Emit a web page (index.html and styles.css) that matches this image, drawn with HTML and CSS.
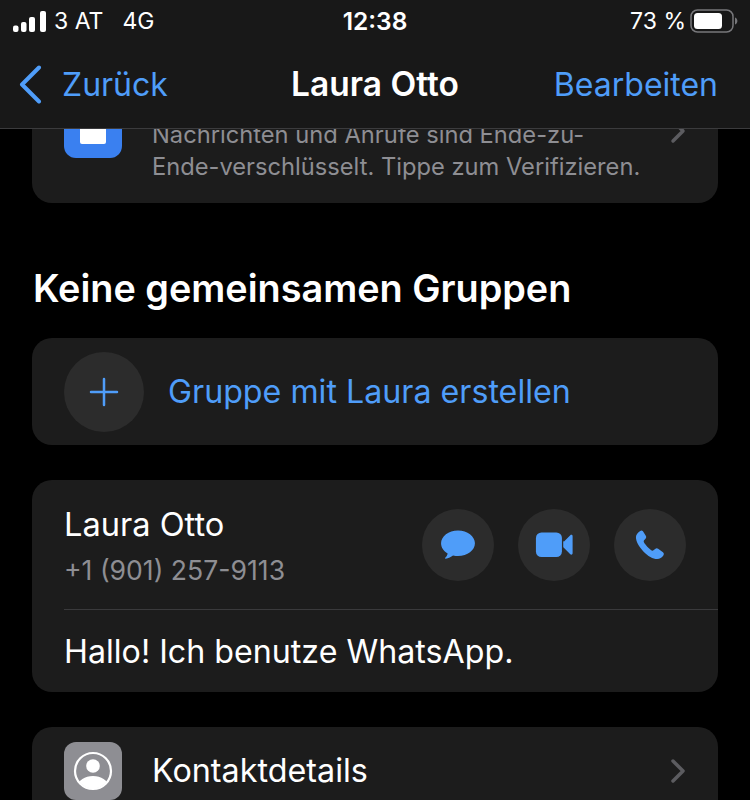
FILE: index.html
```html
<!DOCTYPE html>
<html lang="de">
<head>
<meta charset="utf-8">
<title>Laura Otto</title>
<link rel="stylesheet" href="styles.css">
</head>
<body>
<div class="screen">
  <header class="top">
    <div class="status">
      <div class="status-left">
        <svg class="signal" width="34" height="21" viewBox="0 0 34 21"><rect x="0" y="14.500" width="5.500" height="6.500" rx="2" fill="#fff"/><rect x="8" y="11" width="5.500" height="10" rx="2" fill="#fff"/><rect x="16" y="6" width="6" height="15" rx="2" fill="#fff"/><rect x="27" y="0" width="6" height="21" rx="2" fill="#fff"/></svg>
        <span class="carrier">3 AT</span>
        <span class="net">4G</span>
      </div>
      <span class="clock">12:38</span>
      <div class="status-right">
        <span class="pct">73 %</span>
        <svg width="49" height="24" viewBox="0 0 49 24"><rect x="2" y="1" width="42" height="22" rx="6.500" fill="none" stroke="#77777a" stroke-width="1.500"/><rect x="5" y="4" width="28" height="16" rx="3.500" fill="#fff"/><path d="M46 8.500c1.600.6 2.400 2 2.400 3.500s-.8 2.900-2.400 3.500z" fill="#77777a"/></svg>
      </div>
    </div>
    <nav class="navbar">
      <div class="back">
        <svg width="26" height="40" viewBox="0 0 26 40"><path d="M22 3.500 5 20.500l17 17" fill="none" stroke="#4f9df9" stroke-width="4" stroke-linecap="round" stroke-linejoin="round"/></svg>
        <span>Zurück</span>
      </div>
      <span class="title">Laura Otto</span>
      <span class="edit">Bearbeiten</span>
    </nav>
  </header>

  <main class="content">
    <section class="card secure">
      <div class="lock-icon"><div class="lock-body"></div></div>
      <p class="secure-text">Nachrichten und Anrufe sind Ende-zu-<br>Ende-verschlüsselt. Tippe zum Verifizieren.</p>
      <svg class="chev-small" width="16" height="26" viewBox="0 0 16 26"><path d="M3 3l10 10L3 23" fill="none" stroke="#5c5c60" stroke-width="3.500" stroke-linecap="round" stroke-linejoin="round"/></svg>
    </section>

    <h2 class="section-title">Keine gemeinsamen Gruppen</h2>

    <section class="card group-row">
      <div class="round large">
        <svg width="30" height="30" viewBox="0 0 30 30"><path d="M15 2v26M2 15h26" stroke="#4f9df9" stroke-width="2.500" stroke-linecap="round"/></svg>
      </div>
      <span class="group-label">Gruppe mit Laura erstellen</span>
    </section>

    <section class="card contact">
      <div class="contact-top">
        <div class="contact-id">
          <span class="contact-name">Laura Otto</span>
          <span class="contact-phone">+1 (901) 257-9113</span>
        </div>
        <div class="actions">
          <div class="round"><svg width="36" height="32" viewBox="0 0 38 34"><path d="M19 1.500C8.900 1.500 1 7.700 1 15.200c0 4.400 2.700 8.300 7 10.800-.3 1.800-1.500 3.500-2.600 4.600-.4.400-.1 1 .5.900 3-.4 5.800-1.700 7.800-3.400 1.900.4 3.800.6 5.300.6 10.100 0 18-6.100 18-13.500S29.100 1.500 19 1.500z" fill="#4f9df9"/></svg></div>
          <div class="round"><svg width="39" height="26" viewBox="0 0 40 28"><rect x="0" y="0.500" width="28" height="26.500" rx="6" fill="#4f9df9"/><path d="M30 10.500 37 3.500c1-1 2.500-.4 2.500 1v18.500c0 1.400-1.500 2-2.500 1l-7-7c-.4-.4-.6-.8-.6-1.400v-4.700c0-.5.2-1 .6-1.400z" fill="#4f9df9"/></svg></div>
          <div class="round"><svg width="30" height="30" viewBox="0 0 32 32"><path d="M8.500 1.200c-1-.8-2.200-.7-3.300 0C2.700 2.800 1 4.900 1 7.800c0 4.300 3 9.800 7.700 14.800 5 5.200 10.500 8.400 15 8.400 2.700 0 5-1.500 6.500-3.800.8-1.300.8-2.500-.4-3.500l-5.100-3.600c-1.100-.8-2.200-.7-3.200.1l-1.800 1.500c-.6.500-1.300.5-1.900.1-1.400-.9-3.300-2.600-4.700-4-1.400-1.500-3-3.500-3.700-5-.3-.6-.2-1.300.3-1.800l1.500-1.700c.9-1 1-2.200.3-3.300z" fill="#4f9df9"/></svg></div>
        </div>
      </div>
      <div class="contact-about">Hallo! Ich benutze WhatsApp.</div>
    </section>

    <section class="card details">
      <div class="details-icon">
        <svg width="40" height="40" viewBox="0 0 40 40"><defs><clipPath id="avatar-clip"><circle cx="20" cy="20" r="17.500"/></clipPath></defs><circle cx="20" cy="20" r="18" fill="none" stroke="#fff" stroke-width="2.200"/><circle cx="20" cy="15" r="6.800" fill="#fff"/><ellipse cx="20" cy="35" rx="15" ry="10" fill="#fff" clip-path="url(#avatar-clip)"/></svg>
      </div>
      <span class="details-label">Kontaktdetails</span>
      <svg class="chev" width="16" height="26" viewBox="0 0 16 26"><path d="M3 3l10 10L3 23" fill="none" stroke="#5c5c60" stroke-width="3.500" stroke-linecap="round" stroke-linejoin="round"/></svg>
    </section>
  </main>
</div>
</body>
</html>
```

FILE: styles.css
```css
* { box-sizing: border-box; }
html, body { margin: 0; padding: 0; background: #000; }
body { font-family: Inter, "Liberation Sans", sans-serif; color: #fff; }
.screen { position: relative; width: 750px; height: 800px; overflow: hidden; background: #000; }

.top { position: absolute; top: 0; left: 0; right: 0; z-index: 2; height: 129px; background: #181818; border-bottom: 1px solid #3b3b3d; }
.status { display: flex; justify-content: space-between; align-items: center; height: 42px; padding: 0 12px 0 13px; position: relative; font-size: 23px; }
.status-left { display: flex; align-items: center; }
.signal { margin-right: 7px; }
.carrier { margin-right: 19px; }
.clock { position: absolute; left: 0; right: 0; text-align: center; font-weight: 600; font-size: 24.500px; }
.status-right { display: flex; align-items: center; gap: 3px; }
.navbar { display: flex; justify-content: space-between; align-items: center; height: 84px; padding: 0 32px 0 17px; position: relative; font-size: 32px; color: #4f9df9; }
.back { display: flex; align-items: center; gap: 19px; }
.title { position: absolute; left: 0; right: 0; text-align: center; color: #fff; font-weight: 600; font-size: 33.500px; }
.edit { position: relative; }

.content { display: flex; flex-direction: column; padding: 100px 32px 0; }
.card { background: #1c1c1c; border-radius: 20px; }
.secure { position: relative; height: 103px; display: flex; align-items: flex-end; padding: 0 32px 20px; }
.lock-icon { position: absolute; left: 32px; top: 0; width: 58px; height: 58px; background: #3a80f0; border-radius: 12px; display: flex; align-items: center; justify-content: center; }
.lock-body { width: 26px; height: 26px; background: #fff; border-radius: 2px; margin-top: 4px; }
.secure-text { margin: 0 0 0 88px; font-size: 23.700px; line-height: 32px; color: #8e8e93; white-space: nowrap; }
.chev-small { position: absolute; right: 32px; top: 18px; }

.section-title { margin: 0; padding: 61px 1px 0; height: 135px; font-size: 37.800px; line-height: 48px; font-weight: 600; }

.round { width: 72px; height: 72px; border-radius: 50%; background: #2c2c2c; display: flex; align-items: center; justify-content: center; flex: none; }
.round.large { width: 80px; height: 80px; }
.group-row { height: 107px; display: flex; align-items: center; padding-left: 32px; gap: 24px; }
.group-label { font-size: 32.200px; }
.group-row .group-label { color: #4f9df9; }

.contact { margin-top: 35px; height: 212px; display: flex; flex-direction: column; padding-left: 32px; }
.contact-top { height: 130px; display: flex; justify-content: space-between; align-items: center; padding-right: 32px; border-bottom: 1px solid #3a3a3c; }
.contact-id { display: flex; flex-direction: column; gap: 12px; }
.contact-name { font-size: 32.600px; line-height: 38px; }
.contact-phone { font-size: 26.600px; line-height: 30px; color: #8e8e93; }
.actions { display: flex; gap: 24px; }
.contact-about { flex: 1; display: flex; align-items: center; font-size: 32.200px; }

.details { margin-top: 35px; height: 100px; display: flex; align-items: flex-start; padding: 15px 32px 0; position: relative; }
.details-icon { width: 58px; height: 58px; border-radius: 12px; background: #8e8e93; display: flex; align-items: center; justify-content: center; flex: none; }
.details-label { margin-left: 30px; font-size: 32.300px; line-height: 58px; }
.chev { margin-left: auto; margin-top: 16px; }
```
